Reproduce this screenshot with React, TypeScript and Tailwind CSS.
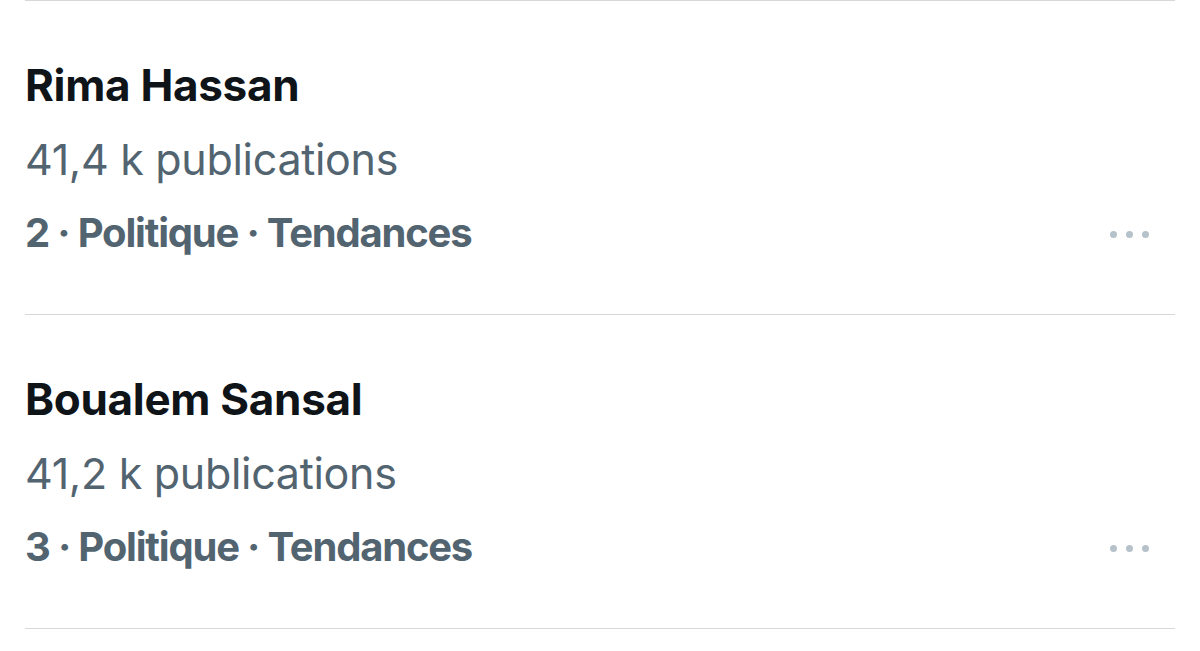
import React from "react";

const rows = [
  { name: "Rima Hassan", count: "41,4 k publications", rank: "2" },
  { name: "Boualem Sansal", count: "41,2 k publications", rank: "3" },
];

function Dots() {
  return (
    <div className="flex items-center gap-[9px] mr-[26px] mt-[2px]">
      <span className="block w-[7px] h-[7px] rounded-full bg-[#b6c2ca]" />
      <span className="block w-[7px] h-[7px] rounded-full bg-[#b6c2ca]" />
      <span className="block w-[7px] h-[7px] rounded-full bg-[#b6c2ca]" />
    </div>
  );
}

export default function App() {
  return (
    <div
      className="w-[1200px] h-[651px] bg-white overflow-hidden px-[25px]"
      style={{ fontFamily: "Inter, 'Liberation Sans', sans-serif" }}
    >
      {rows.map((r) => (
        <div key={r.name} className="border-t border-[#d6d9dc] h-[314px] pt-[47px]">
          <div className="text-[44px] leading-[74px] font-bold text-[#0f1419] tracking-[-0.3px]">
            {r.name}
          </div>
          <div className="text-[43px] leading-[74px] text-[#536471] tracking-[-0.3px]">{r.count}</div>
          <div className="flex items-center justify-between">
            <div className="text-[40px] leading-[74px] font-bold text-[#536471] tracking-[-1.2px]">
              {r.rank} · Politique · Tendances
            </div>
            <Dots />
          </div>
        </div>
      ))}
      <div className="border-t border-[#d6d9dc]" />
    </div>
  );
}
